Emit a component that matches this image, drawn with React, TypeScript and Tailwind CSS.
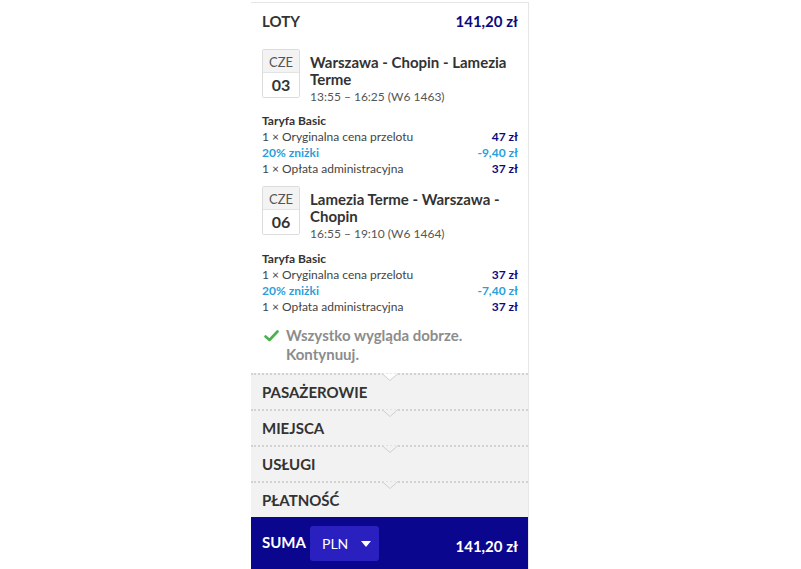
import React from "react";

const F = { fontFamily: "Lato, 'Noto Sans', sans-serif" };

function DateBox({ day, num }: { day: string; num: string }) {
  return (
    <div className="w-[38px] h-[49px] shrink-0 border border-[#dcdcdc] rounded-[2px] flex flex-col overflow-hidden">
      <div className="h-[23px] bg-[#f3f3f3] border-b border-[#e4e4e4] flex items-center justify-center text-[13px] text-[#555] leading-none pt-[2px]">
        {day}
      </div>
      <div className="flex-1 bg-white flex items-center justify-center text-[16px] font-bold text-[#333] leading-none">
        {num}
      </div>
    </div>
  );
}

function Flight({ day, num, l1, l2, time }: { day: string; num: string; l1: string; l2: string; time: string }) {
  return (
    <div className="flex items-start">
      <DateBox day={day} num={num} />
      <div className="ml-[10px] pt-[5px]">
        <div className="text-[15px] font-bold text-[#333] leading-[17px] h-[17px]">{l1}</div>
        <div className="text-[15px] font-bold text-[#333] leading-[17px] h-[17px]">{l2}</div>
        <div className="text-[12px] text-[#555] leading-[16px] mt-[1px]">{time}</div>
      </div>
    </div>
  );
}

function Tariff({ base, disc }: { base: string; disc: string }) {
  return (
    <div className="text-[12px] leading-[16px]">
      <div className="font-bold text-[#333]">Taryfa Basic</div>
      <div className="flex justify-between">
        <span className="text-[#444]">1 × Oryginalna cena przelotu</span>
        <span className="font-bold text-[#0c0a80]">{base}</span>
      </div>
      <div className="flex justify-between font-bold text-[#2a9fdb]">
        <span>20% zniżki</span>
        <span>{disc}</span>
      </div>
      <div className="flex justify-between">
        <span className="text-[#444]">1 × Opłata administracyjna</span>
        <span className="font-bold text-[#0c0a80]">37 zł</span>
      </div>
    </div>
  );
}

function Section({ label, first }: { label: string; first?: boolean }) {
  return (
    <div className="relative h-[36px] bg-[#f2f2f2] border-t-2 border-dotted border-[#d2d2d2] px-[11px] flex items-center pt-[1px]">
      <svg className="absolute left-[131px] top-[-2px]" width="16" height="9" viewBox="0 0 16 9">
        <path d="M0 0.5 L8 7.5 L16 0.5" fill={first ? "#ffffff" : "#f2f2f2"} stroke="#cfcfcf" strokeWidth="1" />
      </svg>
      <span className="text-[15px] font-bold text-[#333] leading-none">{label}</span>
    </div>
  );
}

export default function App() {
  return (
    <div className="w-[801px] h-[569px] bg-white overflow-hidden" style={F}>
      <div className="ml-[251px] w-[278px] mt-[2px] border-t border-r border-[#e6e6e6] flex flex-col">
        <div className="px-[10px] pl-[11px]">
          <div className="h-[37px] flex items-center justify-between">
            <span className="text-[15px] font-bold text-[#333]">LOTY</span>
            <span className="text-[15px] font-bold text-[#0c0a80]">141,20 zł</span>
          </div>
          <div className="mt-[9px]">
            <Flight day="CZE" num="03" l1="Warszawa - Chopin - Lamezia" l2="Terme" time="13:55 – 16:25 (W6 1463)" />
          </div>
          <div className="mt-[8px]">
            <Tariff base="47 zł" disc="-9,40 zł" />
          </div>
          <div className="mt-[9px]">
            <Flight day="CZE" num="06" l1="Lamezia Terme - Warszawa -" l2="Chopin" time="16:55 – 19:10 (W6 1464)" />
          </div>
          <div className="mt-[9px]">
            <Tariff base="37 zł" disc="-7,40 zł" />
          </div>
          <div className="mt-[11px] flex items-start">
            <svg className="mt-[4px] ml-[2px]" width="15" height="12" viewBox="0 0 15 12">
              <path d="M1.5 6.5 L5.5 10 L13.5 1.5" fill="none" stroke="#4caf50" strokeWidth="2.6" strokeLinecap="round" strokeLinejoin="round" />
            </svg>
            <div className="ml-[7px] text-[15px] font-bold text-[#8c8c8c] leading-[19px]">
              <div>Wszystko wygląda dobrze.</div>
              <div>Kontynuuj.</div>
            </div>
          </div>
          <div className="h-[9px]" />
        </div>
        <Section label="PASAŻEROWIE" first />
        <Section label="MIEJSCA" />
        <Section label="USŁUGI" />
        <Section label="PŁATNOŚĆ" />
        <div className="h-[53px] bg-[#0a068e] flex items-center pl-[11px] pr-[10px]">
          <span className="text-[15px] font-bold text-white mb-[2px]">SUMA</span>
          <div className="ml-[4px] w-[69px] h-[35px] bg-[#2a20bf] rounded-[3px] flex items-center pl-[12px]">
            <span className="text-[14px] text-white">PLN</span>
            <svg className="ml-[13px]" width="10" height="6" viewBox="0 0 10 6">
              <path d="M0 0 L10 0 L5 6 Z" fill="#ffffff" />
            </svg>
          </div>
          <span className="ml-auto text-[15px] font-bold text-white mt-[6px]">141,20 zł</span>
        </div>
      </div>
    </div>
  );
}
